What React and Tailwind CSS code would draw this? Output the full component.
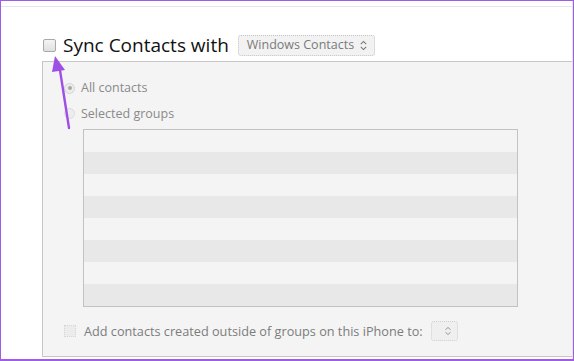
import React from "react";

function Chevrons({ className }) {
    return (
        <svg viewBox="0 0 10 14" className={className} fill="none" stroke="currentColor" strokeWidth="1.2">
            <path d="M2 5.5 L5 2.5 L8 5.5" />
            <path d="M2 8.5 L5 11.5 L8 8.5" />
        </svg>
    );
}

export default function App() {
    const rows = [0, 1, 2, 3, 4, 5, 6];
    return (
        <div
            className="relative w-[574px] h-[361px] overflow-hidden bg-white border-t border-l border-r border-b-2 border-[#a15ce6]"
            style={{ fontFamily: '"Open Sans", "Noto Sans", sans-serif' }}
        >
            <div className="flex h-full flex-col border-r border-[#e4e4e4]">
                <div className="mt-[5px] h-px bg-[#e6e6e6]" />

                {/* header */}
                <div className="ml-[42px] mt-[26px] flex h-[25px] items-center">
                    <div className="h-[13px] w-[13px] rounded-[2px] border border-[#a9a9a9] bg-gradient-to-b from-[#f4f4f4] to-[#e0e0e0]" />
                    <span className="ml-[7px] text-[19px] leading-none text-[#111]">Sync Contacts with</span>
                    <div className="ml-[9px] flex h-[21px] w-[137px] items-center justify-between rounded-[3px] border border-dotted border-[#c4c4c4] bg-[#f2f2f2] pl-[8px] pr-[6px]">
                        <span className="text-[12.5px] text-[#7a7a7a]">Windows Contacts</span>
                        <Chevrons className="h-[13px] w-[9px] text-[#777]" />
                    </div>
                </div>

                {/* panel */}
                <div className="ml-[41px] mt-[3px] mb-[2px] flex flex-1 flex-col border-t border-l border-b border-[#c6c6c6] bg-[#f4f4f4]">
                    <div className="ml-[21px] mt-[20px] flex items-center">
                        <div className="flex h-[11px] w-[11px] items-center justify-center rounded-full border border-[#d4d4d4] bg-[#ececec]">
                            <div className="h-[4px] w-[4px] rounded-full bg-[#a8a8a8]" />
                        </div>
                        <span className="ml-[6px] text-[12.5px] leading-none text-[#8a8a8a]">All contacts</span>
                    </div>
                    <div className="ml-[21px] mt-[13px] flex items-center">
                        <div className="h-[11px] w-[11px] rounded-full border border-[#dcdcdc] bg-[#ededed]" />
                        <span className="ml-[6px] text-[12.5px] leading-none text-[#8a8a8a]">Selected groups</span>
                    </div>

                    <div className="ml-[40px] mt-[9px] w-[435px] border border-[#c2c2c2] bg-[#f4f4f4]">
                        <div className="h-[22px] bg-[#f4f4f4]" />
                        {rows.map((i) => (
                            <div key={i} className={i % 2 === 0 ? "h-[22px] bg-[#e8e8e8]" : "h-[22px] bg-[#f4f4f4]"} />
                        ))}
                    </div>

                    <div className="ml-[21px] mt-[14px] flex items-center">
                        <div className="h-[12px] w-[12px] border border-dotted border-[#d6d6d6] bg-[#ececec]" />
                        <span className="ml-[8px] text-[12.7px] leading-none text-[#7c7c7c]">
                            Add contacts created outside of groups on this iPhone to:
                        </span>
                        <div className="ml-[8px] flex h-[20px] w-[27px] items-center justify-end rounded-[3px] border border-dotted border-[#cfcfcf] bg-[#efefef] pr-[5px]">
                            <Chevrons className="h-[12px] w-[8px] text-[#8a8a8a]" />
                        </div>
                    </div>
                </div>
            </div>

            {/* annotation arrow */}
            <svg className="absolute left-0 top-0" width="120" height="140" viewBox="0 0 120 140">
                <path d="M68 127 L58.5 66" stroke="#9d4fe6" strokeWidth="2.4" strokeLinecap="round" fill="none" />
                <path d="M54 55 L64 69 L51 71 Z" fill="#9d4fe6" />
            </svg>
        </div>
    );
}
